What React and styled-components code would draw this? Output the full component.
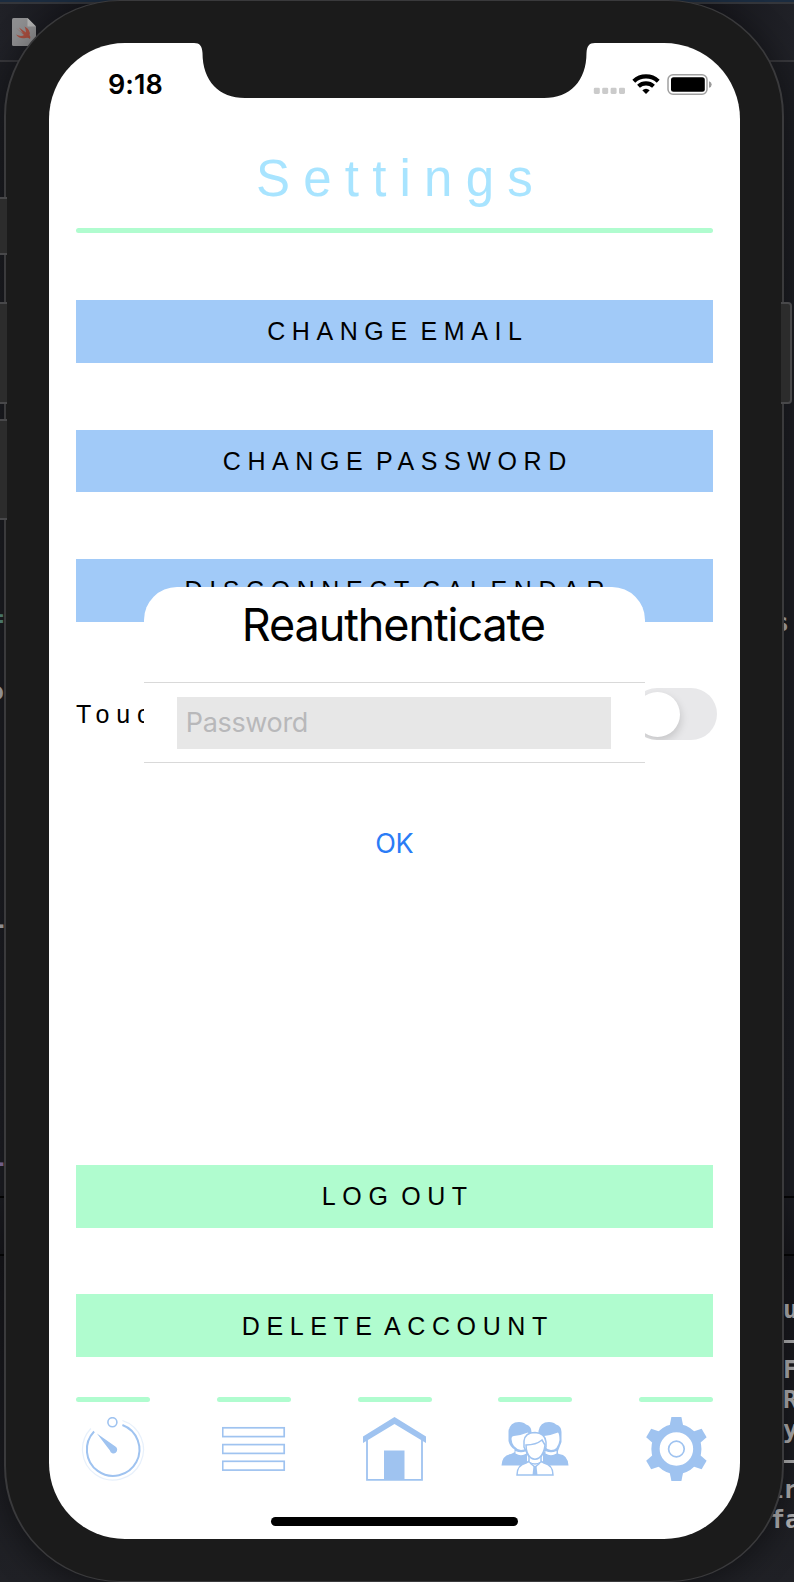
import React from 'react';
import styled, { createGlobalStyle } from 'styled-components';

const colors = {
  blue: '#a1caf8',
  icon: '#9fc3f0',
  mint: '#b0fccf',
  title: '#a8e4ff',
  bezel: '#1b1b1b',
  rim: '#3a3a3c',
};

const helvetica = '"Liberation Sans", Arial, sans-serif';
const system = 'Inter, "Liberation Sans", sans-serif';

const GlobalStyle = createGlobalStyle`
  * { box-sizing: border-box; }
  body { margin: 0; background: #1c1d22; }
`;

const Stage = styled.div`
  display: grid;
  width: 794px;
  height: 1582px;
  overflow: hidden;
`;

/* ---------- editor window behind the device ---------- */

const Editor = styled.div`
  grid-area: 1 / 1;
  height: 1582px;
  overflow: hidden;
  background: linear-gradient(#1c1d22 0, #1e1f25 1190px, #17171c 1260px, #202126 1582px);
`;

const EditorTitle = styled.div`
  height: 4px;
  background: #1b2c40;
  border-bottom: 2px solid #34363b;
`;

const EditorTabs = styled.div`
  height: 58px;
  padding: 14px 12px;
  background: linear-gradient(90deg, #202127, #131318 15%, #131318 85%, #202127);
  border-bottom: 2px solid #37373b;
`;

const EditorBody = styled.div`
  display: flex;
  justify-content: space-between;
`;

const Gutter = styled.div`
  width: ${(p) => p.$width}px;
  height: 1520px;
  overflow: hidden;
  display: flex;
  flex-direction: column;
`;

const CellBlock = styled.div`
  position: relative;
  z-index: 1;
  flex: none;
  height: ${(p) => p.$height}px;
  margin: ${(p) => p.$gap}px ${(p) => p.$inset || 0}px 0 ${(p) => p.$indent || 0}px;
  background: #2c2c2c;
  border: 2px solid #48484a;
  border-width: 2px ${(p) => (p.$inset ? 2 : 0)}px 2px 0;
  border-radius: 0 ${(p) => (p.$inset ? '4px 4px' : '0 0')} 0;
`;

const Rule = styled.div`
  flex: none;
  height: 2px;
  margin-top: ${(p) => p.$gap}px;
  background: #050506;
`;

const CodeLine = styled.div`
  flex: none;
  height: 30px;
  margin-top: ${(p) => p.$gap || 0}px;
  margin-left: ${(p) => p.$indent || 0}px;
  font: bold 25px/30px "DejaVu Sans Mono", "Liberation Mono", monospace;
  color: ${(p) => p.$color || '#b2b2b4'};
  white-space: pre;
`;

/* ---------- device ---------- */

const Phone = styled.div`
  grid-area: 1 / 1;
  position: relative;
  width: 780px;
  height: 1582px;
  margin-left: 4px;
  padding: 42px 42px 42px 43px;
  background: ${colors.bezel};
  border: solid ${colors.rim};
  border-width: 1px 2px;
  border-radius: 116px;
  box-shadow: 0 6px 34px rgba(0, 0, 0, 0.45);
`;

const Screen = styled.div`
  position: relative;
  display: flex;
  flex-direction: column;
  width: 691px;
  height: 1496px;
  background: #fff;
  border-radius: 76px;
  overflow: hidden;
`;

const StatusBar = styled.div`
  display: flex;
  flex: none;
  height: 55px;
`;

const Clock = styled.div`
  width: 145px;
  padding: 25px 0 0 59px;
  font: 600 27px/34px ${system};
  letter-spacing: 0.1px;
  color: #000;
`;

const StatusIcons = styled.div`
  width: 145px;
  padding-top: 30px;
`;

const Page = styled.div`
  flex: 1;
  display: flex;
  flex-direction: column;
  padding: 0 27px;
`;

const Title = styled.h1`
  height: 130px;
  margin: 0;
  padding: 51px 0 0 13px;
  font: 400 51px/60px ${helvetica};
  letter-spacing: 13.2px;
  text-align: center;
  color: ${colors.title};
`;

const Bar = styled.div`
  flex: none;
  width: 100%;
  height: 5px;
  border-radius: 2.5px;
  background: ${colors.mint};
`;

const Actions = styled.div`
  display: flex;
  flex-direction: column;
  gap: 66.8px;
  margin-top: ${(p) => p.$top};
`;

const ActionButton = styled.button`
  display: block;
  width: 100%;
  height: 62.6px;
  padding: 0 0 0 6.6px;
  border: 0;
  background: ${(p) => (p.$mint ? colors.mint : colors.blue)};
  font: 400 25px/62px ${helvetica};
  letter-spacing: 6.6px;
  word-spacing: -6.8px;
  text-align: center;
  white-space: nowrap;
  color: #000;
`;

const ToggleRow = styled.div`
  display: flex;
  align-items: center;
  justify-content: space-between;
  height: 52px;
  margin-right: -4px;
  font: 400 25px/52px ${helvetica};
  letter-spacing: 6.9px;
  color: #000;
`;

const Switch = styled.div`
  width: 86px;
  height: 52px;
  padding: 3.5px;
  border-radius: 26px;
  background: #e8e8ea;
  overflow: hidden;
`;

const Knob = styled.div`
  width: 45px;
  height: 45px;
  border-radius: 50%;
  background: #fff;
  box-shadow: 1px 4px 9px rgba(0, 0, 0, 0.15);
`;

const TabBar = styled.div`
  display: flex;
  justify-content: space-between;
  margin-top: 40px;
`;

const Tab = styled.div`
  width: 74px;
  display: flex;
  flex-direction: column;
  align-items: center;
  gap: 15px;
`;

const HomeIndicator = styled.div`
  width: 247px;
  height: 8.5px;
  margin: 36px auto 13.5px;
  border-radius: 5px;
  background: #000;
`;

/* ---------- dialog ---------- */

const Dialog = styled.div`
  position: absolute;
  left: 95px;
  top: 543.5px;
  width: 500.7px;
  height: 370px;
  border-radius: 33px;
  background: #fff;
  text-align: center;
  font-family: ${system};
`;

const DialogTitle = styled.div`
  height: 95.5px;
  padding: 10px 2px 0 0;
  font-size: 45px;
  line-height: 56px;
  letter-spacing: -1.1px;
  color: #000;
`;

const FieldRow = styled.div`
  height: 80.5px;
  padding: 14px 33.3px;
  border: solid #d9d9d9;
  border-width: 1.5px 0;
`;

const Field = styled.div`
  height: 51.5px;
  padding-left: 8.5px;
  background: #e7e7e7;
  font-size: 27px;
  line-height: 52px;
  letter-spacing: -0.35px;
  text-align: left;
  color: #b8b8ba;
`;

const OkButton = styled.div`
  padding-top: 61px;
  font-size: 27px;
  line-height: 40px;
  letter-spacing: -0.4px;
  color: #2a7cf6;
`;

/* ---------- drawings ---------- */

const SwiftFile = () => (
  <svg width="24" height="28" viewBox="0 0 24 28" display="block">
    <path d="M1.5 0H15.5L24 8.500V26.500Q24 28 22.500 28H1.500Q0 28 0 26.500V1.500Q0 0 1.500 0Z" fill="#909092" />
    <path d="M15.500 0V8.500H24Z" fill="#b5b5b5" />
    <path d="M4 10L11 15.500L7 9.500L14 14.500Q14 11 12.500 8.500Q19 12 17.500 17Q19 19 18 21Q16 19 13.500 20Q8 21.500 4 16.500Q9 19 12 17Z" fill="#a94f40" />
  </svg>
);

const Notch = () => (
  <svg width="401" height="55" viewBox="0 0 401 55" display="block">
    <path
      d="M0 0H401C395 0 393 3 392.500 10C392.500 38 376 55 350 55H51C25 55 8.500 38 8.500 10C8 3 6 0 0 0Z"
      fill={colors.bezel}
    />
  </svg>
);

const Indicators = () => (
  <svg width="120" height="24" viewBox="0 0 120 24" display="block" overflow="visible">
    <g fill="#cbcbcb">
      {[0, 8.4, 16.8, 25.2].map((x) => (
        <rect key={x} x={x - 1.2} y="14.700" width="6" height="6.200" rx="1.300" />
      ))}
    </g>
    <g fill="none" stroke="#000" strokeWidth="4.200">
      <path d="M38.800 8.200A18 18 0 0 1 63.200 8.200" />
      <path d="M43.500 13.200A11.300 11.300 0 0 1 58.500 13.200" />
    </g>
    <path d="M47.300 17.300Q51 14.300 54.700 17.300L51 21Z" />
    <rect x="73" y="1.800" width="39" height="19.400" rx="5" fill="none" stroke="#a0a0a0" strokeWidth="1.500" />
    <rect x="76" y="4.300" width="33.800" height="14.400" rx="2.500" />
    <path d="M114 8.300Q116.700 9 116.700 11.500T114 14.700Z" fill="#9b9b9b" />
  </svg>
);

const TimerIcon = () => (
  <svg width="64" height="64" viewBox="0.6 0 64 64" fill="none" stroke={colors.icon}>
    <path d="M42 3.500A30.500 30.500 0 1 1 10.500 11.500" strokeWidth="1.200" opacity=".25" />
    <path d="M42 8A26.300 26.300 0 1 1 13.700 14.500" strokeWidth="2" />
    <circle cx="32" cy="5.200" r="4.500" strokeWidth="1.600" />
    <path d="M16.500 16.500L35 29.500A3.700 3.700 0 1 1 29.500 33.500Z" fill={colors.icon} stroke="none" />
  </svg>
);

const ListIcon = () => (
  <svg width="64" height="64" viewBox="1 0 64 64" fill="none" stroke={colors.icon} strokeWidth="1.700">
    {[10.8, 27.6, 44.3].map((y) => (
      <rect key={y} x="1.700" y={y} width="61.500" height="8.800" />
    ))}
  </svg>
);

const HouseIcon = () => (
  <svg width="64" height="64" viewBox="0.5 0 64 64" fill={colors.icon}>
    <path d="M.500 19.500L32 0L63.500 19.500V26L32 7L.500 26Z" />
    <path d="M4.500 23V62.800H59.500V23" fill="none" stroke={colors.icon} strokeWidth="1.800" />
    <path d="M21.500 33.500H42V63H21.500Z" />
  </svg>
);

const PeopleIcon = () => (
  <svg width="68" height="64" viewBox="0 0 68 64">
    <g fill={colors.icon}>
      <path d="M.500 48.500Q1 38 10 37L14 35H26V48.500Z" />
      <path d="M67.500 48.500Q67 38 58 37L54 35H42V48.500Z" />
    </g>
    {[0, 30].map((x) => (
      <g key={x} transform={`translate(${x} 0)`}>
        <path
          d="M7.500 24V14Q9 5 18 5Q23 5 25 7.500Q30.500 9 30.500 15V25L27 34V37L20 40L13.500 37V32.500Q9 30 7.500 24Z"
          fill={colors.icon}
        />
        <path d="M10.500 22Q10.500 19 13 19Q21 18 27 15.500Q28.500 17 28.500 23Q27 33 20 33Q11 31 10.500 22Z" fill="#fff" />
        <path d="M14.500 34Q20 36.500 25.500 34V36.500Q20 40 14.500 36.500Z" fill="#fff" />
      </g>
    ))}
    <g fill="#fff" stroke={colors.icon} strokeWidth="1.500">
      <path d="M16 58Q16 48 25 46L30 43H38L43 46Q52 48 52 58Z" />
      <path d="M23 30V24Q24 15.500 34 15.500Q44 16 45 25V30L40 40V45Q34 49 28 45V40Z" />
      <path d="M25 28Q35 28 41 23L44 28Q43 37 38 41Q34 43.500 30 41Q25 37 25 28Z" />
      <path d="M29 46L34 50L39 46M34 50V58" fill="none" />
    </g>
    <path d="M32.500 49H35.500L36.500 58H31.500Z" fill={colors.icon} />
  </svg>
);

const GearIcon = () => (
  <svg width="64" height="64" viewBox="-0.4 0 64 64" fill={colors.icon}>
    <circle cx="32" cy="32" r="20.900" fill="none" stroke={colors.icon} strokeWidth="8.300" />
    {[0, 60, 120, 180, 240, 300].map((a) => (
      <path key={a} transform={`rotate(${a} 32 32)`} d="M27 0H37L39 10H25Z" />
    ))}
    <circle cx="32" cy="32" r="7.800" fill="none" stroke={colors.icon} strokeWidth="1.700" />
  </svg>
);

const tabs = [TimerIcon, ListIcon, HouseIcon, PeopleIcon, GearIcon];

export default function App() {
  return (
    <Stage>
      <GlobalStyle />
      <Editor>
        <EditorTitle />
        <EditorTabs>
          <SwiftFile />
        </EditorTabs>
        <EditorBody>
          <Gutter $width={7}>
            <CellBlock $gap={135} $height={58} />
            <CellBlock $gap={47} $height={102} />
            <CellBlock $gap={15} $height={101} />
            <CodeLine $gap={84} $indent={-11} $color="#5b9080">=</CodeLine>
            <CodeLine $gap={43} $indent={-11}>o</CodeLine>
            <CodeLine $gap={203} $indent={-8}>-</CodeLine>
            <CodeLine $gap={208} $indent={-8} $color="#8b76a8">-</CodeLine>
            <Rule $gap={18} />
            <Rule $gap={56} />
          </Gutter>
          <Gutter $width={25}>
            <CellBlock $gap={240} $height={102} $inset={2} $indent={12} />
            <CodeLine $gap={204} $indent={5}>s</CodeLine>
            <Rule $gap={558} />
            <Rule $gap={56} />
            <CodeLine $gap={39} $indent={14}>u</CodeLine>
            <CodeLine $indent={14}>—</CodeLine>
            <CodeLine $indent={14}>F</CodeLine>
            <CodeLine $indent={14}>R</CodeLine>
            <CodeLine $indent={14}>y</CodeLine>
            <CodeLine $indent={14}>—</CodeLine>
            <CodeLine $indent={-1}>ir</CodeLine>
            <CodeLine $indent={1}>fa</CodeLine>
          </Gutter>
        </EditorBody>
      </Editor>

      <Phone>
        <Screen>
          <StatusBar>
            <Clock>9:18</Clock>
            <Notch />
            <StatusIcons>
              <Indicators />
            </StatusIcons>
          </StatusBar>
          <Page>
            <Title>Settings</Title>
            <Bar />
            <Actions $top="67.2px">
              <ActionButton>CHANGE EMAIL</ActionButton>
              <ActionButton>CHANGE PASSWORD</ActionButton>
              <ActionButton>DISCONNECT CALENDAR</ActionButton>
              <ToggleRow>
                <span>Touch ID</span>
                <Switch>
                  <Knob />
                </Switch>
              </ToggleRow>
            </Actions>
            <Actions $top="auto">
              <ActionButton $mint>LOG OUT</ActionButton>
              <ActionButton $mint>DELETE ACCOUNT</ActionButton>
            </Actions>
            <TabBar>
              {tabs.map((Icon, i) => (
                <Tab key={i}>
                  <Bar />
                  <Icon />
                </Tab>
              ))}
            </TabBar>
            <HomeIndicator />
          </Page>
          <Dialog>
            <DialogTitle>Reauthenticate</DialogTitle>
            <FieldRow>
              <Field>Password</Field>
            </FieldRow>
            <OkButton>OK</OkButton>
          </Dialog>
        </Screen>
      </Phone>
    </Stage>
  );
}
